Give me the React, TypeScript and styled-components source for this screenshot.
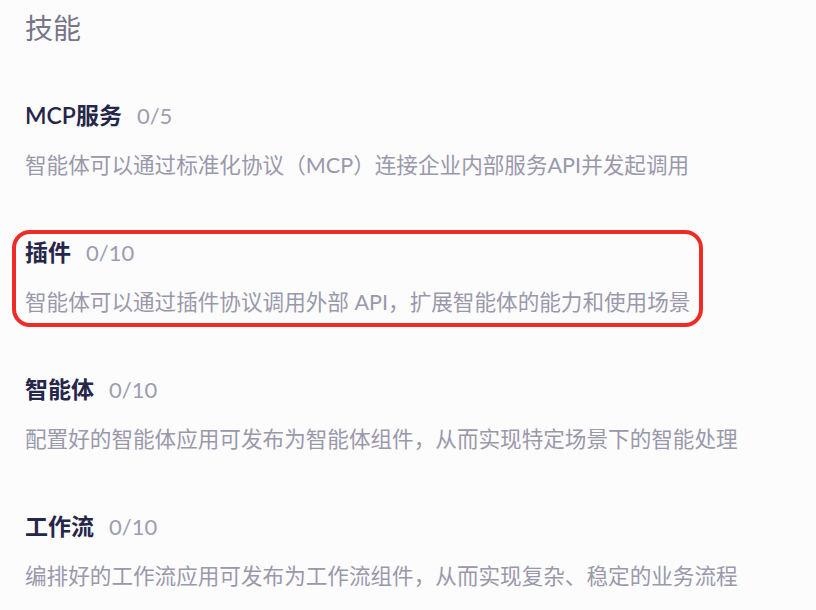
import styled, { createGlobalStyle } from "styled-components";

const GlobalStyle = createGlobalStyle`
  html, body {
    margin: 0;
    padding: 0;
    background: #fcfcfd;
  }
  body {
    font-family: Lato, "Noto Sans CJK SC", sans-serif;
  }
`;

const Page = styled.div`
  width: 816px;
  height: 610px;
  box-sizing: border-box;
  padding: 8px 0 0 25px;
  overflow: hidden;
  display: flex;
  flex-direction: column;
`;

const Title = styled.h2`
  margin: 0 0 51px;
  font-size: 28px;
  line-height: 40px;
  font-weight: 400;
  color: #777589;
`;

const SectionList = styled.div`
  display: flex;
  flex-direction: column;
  gap: 55px;
`;

const Section = styled.section<{ $highlight?: boolean }>`
  position: relative;
  width: 760px;
  display: flex;
  flex-direction: column;
  gap: 18px;

  ${(p) =>
    p.$highlight &&
    `
    &::after {
      content: "";
      position: absolute;
      left: -13px;
      top: -6px;
      width: 691px;
      bottom: -9px;
      box-sizing: border-box;
      border: 4.5px solid #ee2b25;
      border-radius: 18px;
      pointer-events: none;
    }
  `}
`;

const Heading = styled.div`
  display: flex;
  align-items: baseline;
  gap: 15px;
  height: 32px;
  line-height: 32px;
`;

const Name = styled.span`
  font-size: 23px;
  font-weight: 600;
  color: #26254a;
`;

const Count = styled.span`
  font-size: 22px;
  color: #9e9cb1;
`;

const Desc = styled.p`
  margin: 0;
  font-size: 21.6px;
  line-height: 32px;
  color: #9a98ab;
  white-space: nowrap;
`;

const skills = [
  {
    name: "MCP服务",
    count: "0/5",
    desc: "智能体可以通过标准化协议（MCP）连接企业内部服务API并发起调用",
  },
  {
    name: "插件",
    count: "0/10",
    desc: "智能体可以通过插件协议调用外部 API，扩展智能体的能力和使用场景",
    highlight: true,
  },
  {
    name: "智能体",
    count: "0/10",
    desc: "配置好的智能体应用可发布为智能体组件，从而实现特定场景下的智能处理",
  },
  {
    name: "工作流",
    count: "0/10",
    desc: "编排好的工作流应用可发布为工作流组件，从而实现复杂、稳定的业务流程",
  },
];

export default function App() {
  return (
    <>
      <GlobalStyle />
      <Page>
        <Title>技能</Title>
        <SectionList>
          {skills.map((s) => (
            <Section key={s.name} $highlight={s.highlight}>
              <Heading>
                <Name>{s.name}</Name>
                <Count>{s.count}</Count>
              </Heading>
              <Desc>{s.desc}</Desc>
            </Section>
          ))}
        </SectionList>
      </Page>
    </>
  );
}
